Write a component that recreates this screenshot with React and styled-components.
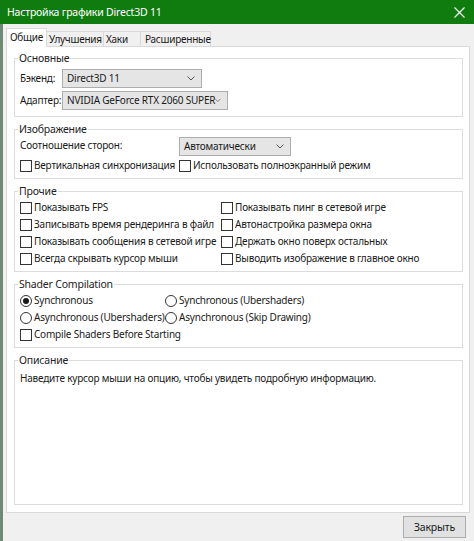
import React, { useState } from "react";
import styled, { createGlobalStyle } from "styled-components";

const GlobalStyle = createGlobalStyle`
  html, body {
    margin: 0;
    padding: 0;
    background: #f0f0f0;
  }
  * {
    box-sizing: border-box;
  }
`;

const otherOptions = [
  ["Показывать FPS", "Показывать пинг в сетевой игре"],
  ["Записывать время рендеринга в файл", "Автонастройка размера окна"],
  ["Показывать сообщения в сетевой игре", "Держать окно поверх остальных"],
  ["Всегда скрывать курсор мыши", "Выводить изображение в главное окно"],
];

const tabs = [
  { title: "Общие", width: 41 },
  { title: "Улучшения", width: 58 },
  { title: "Хаки", width: 38 },
  { title: "Расширенные", width: 71 },
];

function Chevron() {
  return (
    <svg width="8" height="5" viewBox="0 0 8 5">
      <path d="M0.5 0.5 L4 4 L7.5 0.5" fill="none" stroke="#555" strokeWidth="1" />
    </svg>
  );
}

function Select({ value, width }) {
  return (
    <SelectBox $width={width}>
      <span>{value}</span>
      <Chevron />
    </SelectBox>
  );
}

function Check({ label, checked }) {
  return (
    <Option>
      <CheckMark>{checked ? "✓" : ""}</CheckMark>
      <span>{label}</span>
    </Option>
  );
}

function Radio({ label, selected }) {
  return (
    <Option>
      <RadioMark $selected={selected} />
      <span>{label}</span>
    </Option>
  );
}

export default function App() {
  const [activeTab] = useState(0);

  return (
    <>
      <GlobalStyle />
      <Window>
        <TitleBar>
          <span>Настройка графики Direct3D 11</span>
          <svg width="11" height="11" viewBox="0 0 11 11">
            <path d="M0.5 0.5 L10.5 10.5 M10.5 0.5 L0.5 10.5" stroke="#fff" strokeWidth="1.1" />
          </svg>
        </TitleBar>
        <Body>
          <TabStrip>
            {tabs.map((t, i) => (
              <Tab key={t.title} $active={i === activeTab} $width={t.width}>
                {t.title}
              </Tab>
            ))}
          </TabStrip>
          <Panel>
            <Group>
              <legend>Основные</legend>
              <BasicGrid>
                <Label>Бэкенд:</Label>
                <Select value="Direct3D 11" width={140} />
                <Label>Адаптер:</Label>
                <Select value="NVIDIA GeForce RTX 2060 SUPER" width={166} />
              </BasicGrid>
            </Group>

            <Group>
              <legend>Изображение</legend>
              <Columns $first={159}>
                <Label>Соотношение сторон:</Label>
                <Select value="Автоматически" width={112} />
              </Columns>
              <Columns $first={159}>
                <Check label="Вертикальная синхронизация" />
                <Check label="Использовать полноэкранный режим" />
              </Columns>
            </Group>

            <Group>
              <legend>Прочие</legend>
              <Columns $first={201}>
                {otherOptions.map(([a, b]) => (
                  <React.Fragment key={a}>
                    <Check label={a} />
                    <Check label={b} />
                  </React.Fragment>
                ))}
              </Columns>
            </Group>

            <Group>
              <legend>Shader Compilation</legend>
              <Columns $first={145}>
                <Radio label="Synchronous" selected />
                <Radio label="Synchronous (Ubershaders)" />
                <Radio label="Asynchronous (Ubershaders)" />
                <Radio label="Asynchronous (Skip Drawing)" />
                <Check label="Compile Shaders Before Starting" />
              </Columns>
            </Group>

            <Group $grow>
              <legend>Описание</legend>
              <Description>
                Наведите курсор мыши на опцию, чтобы увидеть подробную информацию.
              </Description>
            </Group>
          </Panel>
          <Footer>
            <Button>Закрыть</Button>
          </Footer>
        </Body>
      </Window>
    </>
  );
}

const Window = styled.div`
  width: 474px;
  height: 541px;
  display: flex;
  flex-direction: column;
  border-left: 3px solid #6f8a74;
  font-family: "Noto Sans", "Open Sans", sans-serif;
  font-size: 10px;
  letter-spacing: -0.2px;
  line-height: 15px;
  color: #1a1a1a;
  background: #f0f0f0;
`;

const TitleBar = styled.div`
  height: 24px;
  flex-shrink: 0;
  display: flex;
  align-items: center;
  justify-content: space-between;
  margin-left: -3px;
  padding: 0 9px 0 7px;
  background: #107c10;
  color: #fff;
  font-size: 10.5px;
`;

const Body = styled.div`
  flex: 1;
  display: flex;
  flex-direction: column;
  padding: 4px 4px 3px 3px;
`;

const TabStrip = styled.div`
  display: flex;
  align-items: flex-end;
  height: 19px;
  position: relative;
  z-index: 1;
`;

const Tab = styled.div`
  width: ${(p) => p.$width}px;
  height: ${(p) => (p.$active ? "19px" : "16px")};
  padding: 0 0 0 ${(p) => (p.$active ? "3px" : "2px")};
  margin-right: -1px;
  display: flex;
  align-items: center;
  white-space: nowrap;
  font-size: 10px;
  letter-spacing: -0.25px;
  border: 1px solid #d9d9d9;
  border-bottom: ${(p) => (p.$active ? "1px solid #fff" : "1px solid #d9d9d9")};
  background: ${(p) => (p.$active ? "#fff" : "#f0f0f0")};
  &:last-child {
    padding-left: 4px;
  }
`;

const Panel = styled.div`
  flex: 1;
  display: flex;
  flex-direction: column;
  gap: 5px;
  margin-top: -1px;
  padding: 4px 6px 7px 7px;
  background: #fff;
  border: 1px solid #d9d9d9;
`;

const Group = styled.fieldset`
  margin: 0;
  padding: 1px 5px 4px 5px;
  border: 1px solid #dcdcdc;
  flex: ${(p) => (p.$grow ? "1" : "none")};
  display: flex;
  flex-direction: column;
  gap: 1px;
  legend {
    padding: 0 1px;
    margin-left: -2px;
    font-size: 10.5px;
    line-height: 14px;
    color: #222;
  }
`;

const BasicGrid = styled.div`
  display: grid;
  grid-template-columns: 42px auto;
  justify-items: start;
  align-items: center;
  row-gap: 3px;
  padding: 3px 0 2px;
`;

const Columns = styled.div`
  display: grid;
  grid-template-columns: ${(p) => p.$first}px 1fr;
  justify-items: start;
  align-items: center;
  & > * {
    min-height: 17px;
  }
`;

const Label = styled.span`
  white-space: nowrap;
`;

const SelectBox = styled.div`
  width: ${(p) => p.$width}px;
  height: 19px;
  display: flex;
  align-items: center;
  justify-content: space-between;
  padding: 0 6px 0 4px;
  background: #e5e5e5;
  border: 1px solid #adadad;
  white-space: nowrap;
`;

const Option = styled.div`
  display: flex;
  align-items: center;
  gap: 2px;
  white-space: nowrap;
`;

const CheckMark = styled.span`
  width: 12px;
  height: 12px;
  flex-shrink: 0;
  border: 1px solid #333;
  background: #fff;
  font-size: 10px;
  line-height: 10px;
  text-align: center;
`;

const RadioMark = styled.span`
  width: 12px;
  height: 12px;
  flex-shrink: 0;
  border: 1px solid #333;
  border-radius: 50%;
  background: #fff;
  display: flex;
  align-items: center;
  justify-content: center;
  &::after {
    content: "";
    display: ${(p) => (p.$selected ? "block" : "none")};
    width: 6px;
    height: 6px;
    border-radius: 50%;
    background: #1a1a1a;
  }
`;

const Description = styled.div`
  padding-top: 3px;
`;

const Footer = styled.div`
  display: flex;
  justify-content: flex-end;
  padding: 3px 4px 0 0;
`;

const Button = styled.button`
  width: 63px;
  height: 22px;
  background: #e1e1e1;
  border: 1px solid #adadad;
  font-family: inherit;
  font-size: 10.5px;
  letter-spacing: inherit;
  color: #1a1a1a;
  padding: 0;
`;
